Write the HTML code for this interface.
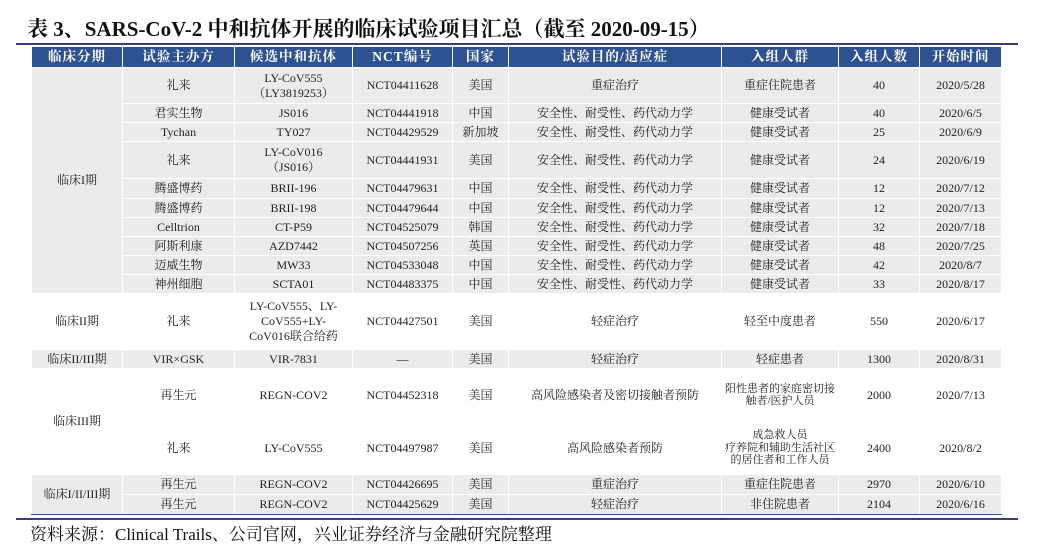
<!DOCTYPE html>
<html><head><meta charset="utf-8"><style>
body{margin:0;background:#fff;width:1046px;height:560px;position:relative;overflow:hidden;font-family:"Liberation Serif","Noto Serif CJK SC",serif;color:#222}
.title{position:absolute;left:27px;top:13px;font-size:21px;font-weight:bold;color:#111;white-space:nowrap}
.rule{position:absolute;left:16px;width:1002px;height:2px;background:#3a3f7a}
table{position:absolute;left:31px;top:46px;border-collapse:collapse;table-layout:fixed;width:971px}
td,th{border:1px solid #fff;text-align:center;font-size:12px;line-height:15px;padding:0;overflow:hidden;font-weight:normal}
th{background:#2d528f;color:#fff;font-weight:bold;font-size:13.5px;height:20px;line-height:18px;letter-spacing:1px}
.g td{background:#ebebeb}
.s{font-size:11px;line-height:12.5px}
.foot{position:absolute;left:30px;top:520px;font-size:17px;color:#111;white-space:nowrap}
</style></head><body>
<div class="title">表 3、SARS-CoV-2 中和抗体开展的临床试验项目汇总（截至 2020-09-15）</div>
<div class="rule" style="top:43px"></div>
<table>
<colgroup><col style="width:91px"><col style="width:112px"><col style="width:118px"><col style="width:100px"><col style="width:56px"><col style="width:213px"><col style="width:117px"><col style="width:81px"><col style="width:82px"></colgroup>
<tr><th>临床分期</th><th>试验主办方</th><th>候选中和抗体</th><th>NCT编号</th><th>国家</th><th>试验目的/适应症</th><th>入组人群</th><th>入组人数</th><th>开始时间</th></tr>
<tr class="g" style="height:36px"><td rowspan="10">临床I期</td><td>礼来</td><td>LY-CoV555<br>（LY3819253）</td><td>NCT04411628</td><td>美国</td><td>重症治疗</td><td>重症住院患者</td><td>40</td><td>2020/5/28</td></tr>
<tr class="g" style="height:19px"><td>君实生物</td><td>JS016</td><td>NCT04441918</td><td>中国</td><td>安全性、耐受性、药代动力学</td><td>健康受试者</td><td>40</td><td>2020/6/5</td></tr>
<tr class="g" style="height:19px"><td>Tychan</td><td>TY027</td><td>NCT04429529</td><td>新加坡</td><td>安全性、耐受性、药代动力学</td><td>健康受试者</td><td>25</td><td>2020/6/9</td></tr>
<tr class="g" style="height:37px"><td>礼来</td><td>LY-CoV016<br>（JS016）</td><td>NCT04441931</td><td>美国</td><td>安全性、耐受性、药代动力学</td><td>健康受试者</td><td>24</td><td>2020/6/19</td></tr>
<tr class="g" style="height:20px"><td>腾盛博药</td><td>BRII-196</td><td>NCT04479631</td><td>中国</td><td>安全性、耐受性、药代动力学</td><td>健康受试者</td><td>12</td><td>2020/7/12</td></tr>
<tr class="g" style="height:19px"><td>腾盛博药</td><td>BRII-198</td><td>NCT04479644</td><td>中国</td><td>安全性、耐受性、药代动力学</td><td>健康受试者</td><td>12</td><td>2020/7/13</td></tr>
<tr class="g" style="height:19px"><td>Celltrion</td><td>CT-P59</td><td>NCT04525079</td><td>韩国</td><td>安全性、耐受性、药代动力学</td><td>健康受试者</td><td>32</td><td>2020/7/18</td></tr>
<tr class="g" style="height:19px"><td>阿斯利康</td><td>AZD7442</td><td>NCT04507256</td><td>英国</td><td>安全性、耐受性、药代动力学</td><td>健康受试者</td><td>48</td><td>2020/7/25</td></tr>
<tr class="g" style="height:19px"><td>迈威生物</td><td>MW33</td><td>NCT04533048</td><td>中国</td><td>安全性、耐受性、药代动力学</td><td>健康受试者</td><td>42</td><td>2020/8/7</td></tr>
<tr class="g" style="height:19px"><td>神州细胞</td><td>SCTA01</td><td>NCT04483375</td><td>中国</td><td>安全性、耐受性、药代动力学</td><td>健康受试者</td><td>33</td><td>2020/8/17</td></tr>
<tr style="height:56px"><td>临床II期</td><td>礼来</td><td>LY-CoV555、LY-<br>CoV555+LY-<br>CoV016联合给药</td><td>NCT04427501</td><td>美国</td><td>轻症治疗</td><td>轻至中度患者</td><td>550</td><td>2020/6/17</td></tr>
<tr class="g" style="height:19px"><td>临床II/III期</td><td>VIR×GSK</td><td>VIR-7831</td><td>—</td><td>美国</td><td>轻症治疗</td><td>轻症患者</td><td>1300</td><td>2020/8/31</td></tr>
<tr style="height:53px"><td rowspan="2">临床III期</td><td>再生元</td><td>REGN-COV2</td><td>NCT04452318</td><td>美国</td><td>高风险感染者及密切接触者预防</td><td class="s">阳性患者的家庭密切接触者/医护人员</td><td>2000</td><td>2020/7/13</td></tr>
<tr style="height:53px"><td>礼来</td><td>LY-CoV555</td><td>NCT04497987</td><td>美国</td><td>高风险感染者预防</td><td class="s">成急救人员<br>疗养院和辅助生活社区的居住者和工作人员</td><td>2400</td><td>2020/8/2</td></tr>
<tr class="g" style="height:20px"><td rowspan="2">临床I/II/III期</td><td>再生元</td><td>REGN-COV2</td><td>NCT04426695</td><td>美国</td><td>重症治疗</td><td>重症住院患者</td><td>2970</td><td>2020/6/10</td></tr>
<tr class="g" style="height:20px"><td>再生元</td><td>REGN-COV2</td><td>NCT04425629</td><td>美国</td><td>轻症治疗</td><td>非住院患者</td><td>2104</td><td>2020/6/16</td></tr>
</table>
<div class="rule" style="top:514px;left:31px;width:971px;height:1px;background:#2d528f"></div>
<div class="rule" style="top:518px"></div>
<div class="foot">资料来源：Clinical Trails、公司官网，兴业证券经济与金融研究院整理</div>
</body></html>
